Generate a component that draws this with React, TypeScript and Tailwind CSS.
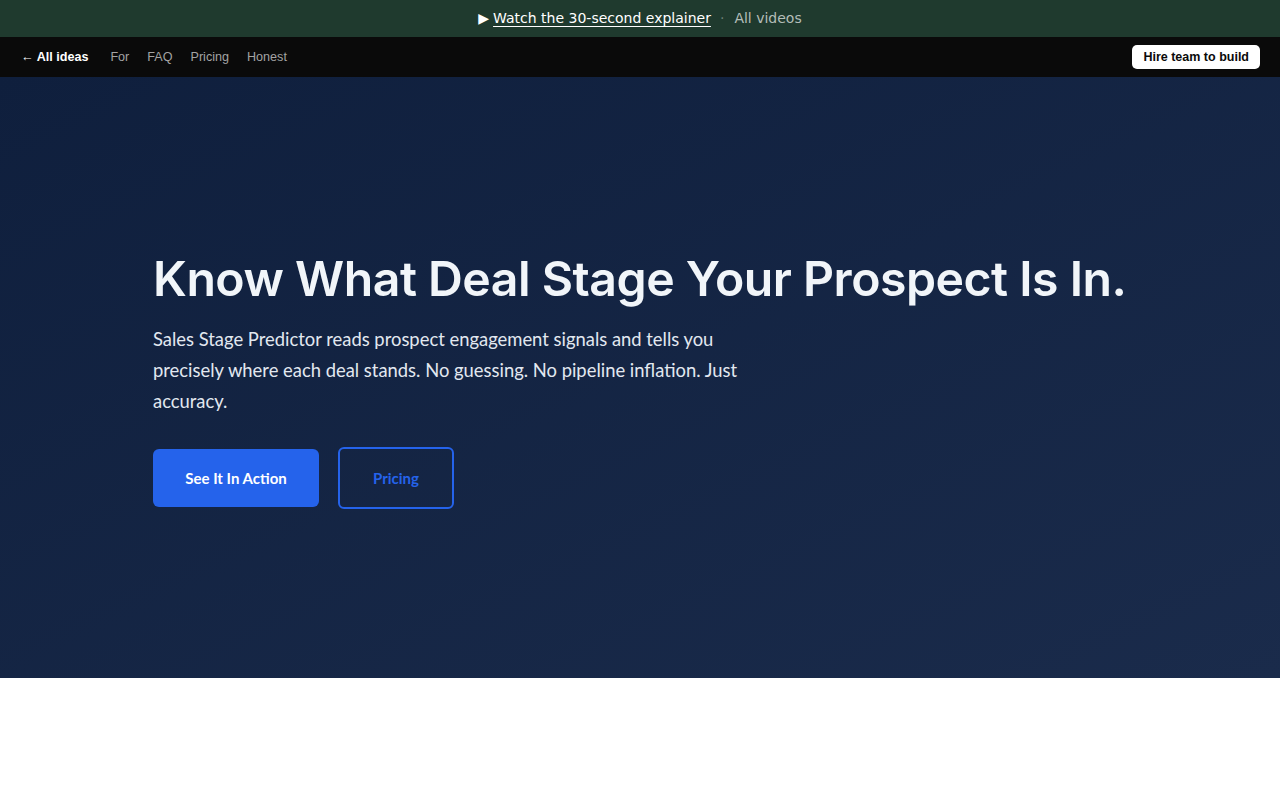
import { useState } from "react";

const navLinks = ["For", "FAQ", "Pricing", "Honest"];

export default function App() {
  const [hovered, setHovered] = useState<string | null>(null);

  return (
    <div className="min-h-screen bg-white">
      {/* 상단 영상 안내 바 */}
      <div className="h-[37px] bg-[#1f3a2e] flex items-center justify-center font-['DejaVu_Sans',sans-serif] text-[14px]">
        <span className="text-white mr-[4px]">▶</span>
        <a href="#" className="text-white underline underline-offset-[3px]">
          Watch the 30-second explainer
        </a>
        <span className="text-[#6b7f75] mx-[9px]">·</span>
        <a href="#" className="text-[#b4bdb8] ml-[1px]">
          All videos
        </a>
      </div>

      {/* 네비게이션 */}
      <nav className="h-[40px] bg-[#0a0a0a] flex items-center justify-between pl-[21px] pr-[20px] font-['Liberation_Sans',Arial,sans-serif] text-[12.6px]">
        <div className="flex items-center gap-[18px]">
          <a href="#" className="text-white font-bold mr-[4px]">
            ← All ideas
          </a>
          {navLinks.map((link) => (
            <a
              key={link}
              href="#"
              onMouseEnter={() => setHovered(link)}
              onMouseLeave={() => setHovered(null)}
              className={hovered === link ? "text-white" : "text-[#a3a3a3]"}
            >
              {link}
            </a>
          ))}
        </div>
        <button className="h-[24px] px-[11px] rounded-[5px] bg-white text-[#0a0a0a] font-bold text-[12.5px]">
          Hire team to build
        </button>
      </nav>

      {/* 히어로 */}
      <section className="h-[601px] bg-gradient-to-br from-[#0f1f3d] to-[#1a2b4b] flex flex-col justify-center">
        <div className="w-[974px] mx-auto pt-[4px]">
          <h1 className="font-['Inter',sans-serif] font-semibold text-[48.2px] leading-[1.2] tracking-[-0.5px] text-[#f1f5f9] whitespace-nowrap">
            Know What Deal Stage Your Prospect Is In.
          </h1>
          <p className="mt-[16px] max-w-[600px] font-['Lato',sans-serif] text-[18.4px] leading-[31px] text-[#e2e8f0]">
            Sales Stage Predictor reads prospect engagement signals and tells you precisely where each deal stands. No
            guessing. No pipeline inflation. Just accuracy.
          </p>
          <div className="mt-[30px] flex items-center gap-[19px] font-['Lato',sans-serif] font-bold text-[15px]">
            <button className="h-[58px] w-[166px] rounded-[6px] bg-[#2563eb] text-white">See It In Action</button>
            <button className="h-[62px] w-[116px] rounded-[6px] border-2 border-[#2563eb] text-[#2563eb]">
              Pricing
            </button>
          </div>
        </div>
      </section>
    </div>
  );
}
